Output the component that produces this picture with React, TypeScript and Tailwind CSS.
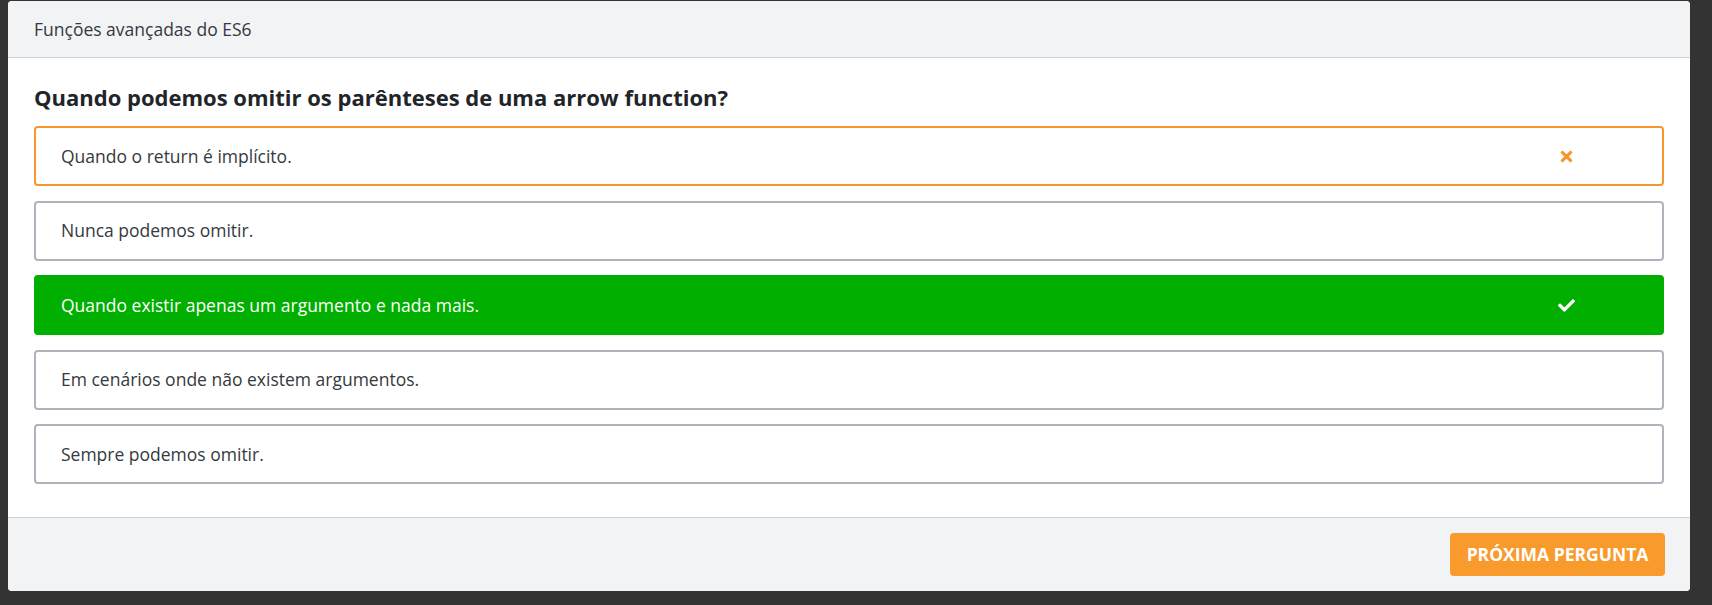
import React from 'react';
import { FaTimes, FaCheck } from 'react-icons/fa';

type Option = {
  text: string;
  state: 'wrong' | 'right' | 'none';
};

const options: Option[] = [
  { text: 'Quando o return é implícito.', state: 'wrong' },
  { text: 'Nunca podemos omitir.', state: 'none' },
  { text: 'Quando existir apenas um argumento e nada mais.', state: 'right' },
  { text: 'Em cenários onde não existem argumentos.', state: 'none' },
  { text: 'Sempre podemos omitir.', state: 'none' },
];

const OptionRow: React.FC<{ option: Option }> = ({ option }) => {
  const box =
    option.state === 'wrong'
      ? 'border-2 border-[#f7962b] bg-white text-[#343a40]'
      : option.state === 'right'
        ? 'border-2 border-[#00af00] bg-[#00af00] text-white'
        : 'border-2 border-[#adb4bc] bg-white text-[#343a40]';

  return (
    <div className={`flex items-center h-[60px] rounded-[4px] pl-[25px] ${box}`}>
      <span className="flex-1 text-[17.5px]">{option.text}</span>
      <span className="w-[18px] mr-[87px] flex justify-center">
        {option.state === 'wrong' && <FaTimes className="text-[#f7962b]" size={17} />}
        {option.state === 'right' && <FaCheck className="text-white" size={17} />}
      </span>
    </div>
  );
};

const App: React.FC = () => {
  return (
    <div className="w-full h-[605px] bg-[#333333] pl-[8px] pt-[1px] font-['Open_Sans',sans-serif]">
      <div className="w-[1682px] h-[590px] bg-white rounded-[4px] overflow-hidden flex flex-col">
        <div className="h-[57px] shrink-0 bg-[#f2f3f5] border-b border-[#cfd2d6] px-[26px] flex items-center">
          <span className="text-[17.5px] text-[#343a40]">Funções avançadas do ES6</span>
        </div>

        <div className="px-[26px] pt-[24px] pb-[33px] flex flex-col">
          <h1 className="text-[22px] font-bold text-[#212529] leading-[30px] mb-[14px]">
            Quando podemos omitir os parênteses de uma arrow function?
          </h1>
          <div className="flex flex-col gap-[14.5px]">
            {options.map((o) => (
              <OptionRow key={o.text} option={o} />
            ))}
          </div>
        </div>

        <div className="flex-1 bg-[#f2f3f5] border-t border-[#cfd2d6] px-[25px] flex items-center justify-end">
          <button className="h-[43px] w-[215px] rounded-[4px] bg-[#f99a2c] text-white font-bold text-[17.5px] uppercase">
            Próxima pergunta
          </button>
        </div>
      </div>
    </div>
  );
};

export default App;
